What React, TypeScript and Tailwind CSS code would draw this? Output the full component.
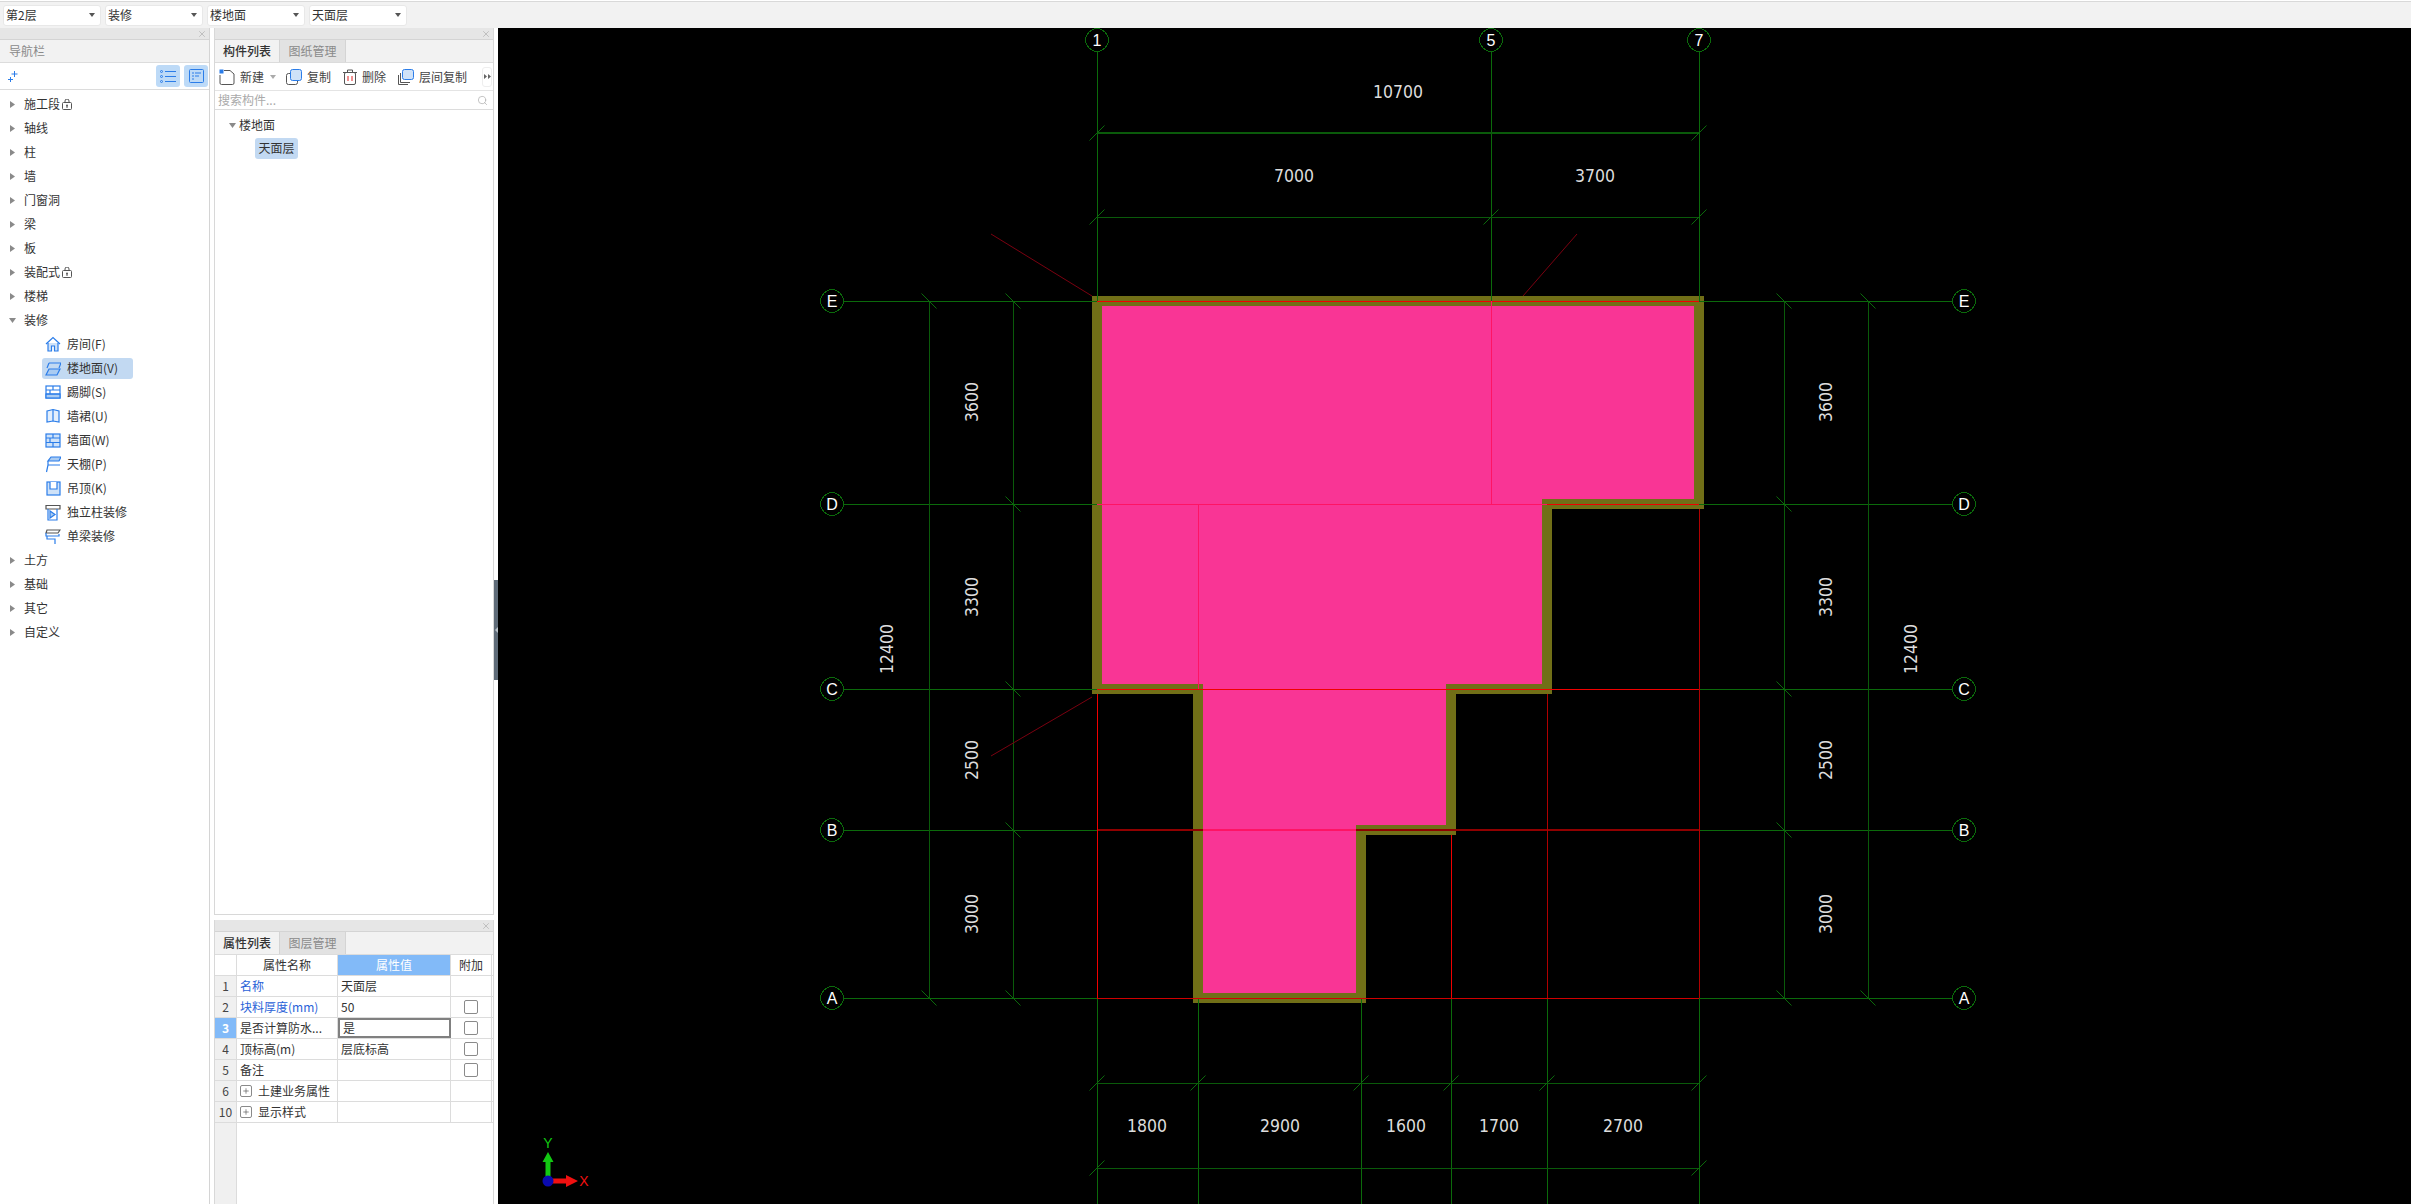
import { Search, X, Plus } from "lucide-react";

const blue = "#2b7de9";

const Caret = ({ open }: { open?: boolean }) =>
  open ? (
    <svg width="7" height="5" viewBox="0 0 7 5"><path d="M0 0H7L3.5 5Z" fill="#8a8a8a" /></svg>
  ) : (
    <svg width="5" height="7" viewBox="0 0 5 7"><path d="M0 0V7L5 3.5Z" fill="#8a8a8a" /></svg>
  );

const Lock = () => (
  <svg width="10" height="11" viewBox="0 0 10 11" fill="none" stroke="#555" className="ml-[2px]">
    <rect x="0.5" y="3.5" width="9" height="7" rx="1" />
    <path d="M3 3.5V2a2 2 0 0 1 4 0v1.5" />
    <circle cx="5" cy="6.5" r="1" fill="#555" stroke="none" />
    <path d="M5 7v2" />
  </svg>
);

const SelectBox = ({ label }: { label: string }) => (
  <div className="w-[98px] h-[21px] bg-white rounded-[3px] border border-[#e8e8e8] flex items-center justify-between pl-[2px] pr-[5px] text-[12px] text-[#333]">
    <span>{label}</span>
    <svg width="6" height="4" viewBox="0 0 6 4"><path d="M0 0H6L3 4Z" fill="#555" /></svg>
  </div>
);

const PanelClose = () => (
  <div className="h-[12px] bg-[#e6e6e6] border-b border-[#d4d4d4] flex items-center justify-end pr-[2px] shrink-0">
    <X size={10} color="#a8a8a8" strokeWidth={1.5} />
  </div>
);

// finish icons, 16x16 box
const icons: Record<string, React.ReactNode> = {
  room: (
    <>
      <path d="M1 8L8 1.5 15 8" />
      <path d="M3 7v8h3.5v-5h3v5H13V7" fill="#cfe2f8" />
    </>
  ),
  floor: (
    <>
      <path d="M4 3H16L14 8" />
      <path d="M4 3L2 8" />
      <path d="M4 9H15L12 15H1Z" fill="#a9cbf2" />
    </>
  ),
  skirt: (
    <>
      <rect x="1" y="2" width="14" height="12" fill="#fff" />
      <rect x="1" y="10" width="14" height="4" fill="#a9cbf2" />
      <path d="M1 6H15M1 10H15M8 2V6M5 6V10" />
    </>
  ),
  dado: (
    <>
      <path d="M2 3L8 1.5 14 3V14L8 13 2 14Z" fill="#e4effc" />
      <path d="M8 1.5V13" />
    </>
  ),
  wall: (
    <>
      <rect x="1" y="2" width="14" height="13" fill="#cfe2f8" />
      <path d="M1 6H15M1 10.500H15M8 2V6M5 6V10.500M8 10.500V15" />
    </>
  ),
  ceil: (
    <>
      <path d="M6 1H16L14 5H3Z" fill="#a9cbf2" />
      <path d="M3 5V9H15M3 9L1.500 16" />
    </>
  ),
  hang: (
    <>
      <rect x="2" y="2" width="13" height="13" fill="#cfe2f8" />
      <path d="M5 2V9H12V2" fill="#fff" />
    </>
  ),
  column: (
    <>
      <path d="M1 1.500H15V5H1Z" stroke="#555" />
      <path d="M3 5V16H12V5" />
      <path d="M5 7V14L10 10.500Z" fill="#a9cbf2" />
    </>
  ),
  beam: (
    <>
      <path d="M2 2H15L13 5H1Z" stroke="#555" />
      <path d="M1 5V8H14V6" />
      <path d="M2 8V11H10V16" />
    </>
  ),
};

const FinishIcon = ({ name }: { name: string }) => (
  <svg width="16" height="17" viewBox="0 0 16 17" fill="none" stroke={blue} strokeWidth="1.2" className="shrink-0">
    {icons[name]}
  </svg>
);

const topNodes = [
  { label: "施工段", lock: true },
  { label: "轴线" },
  { label: "柱" },
  { label: "墙" },
  { label: "门窗洞" },
  { label: "梁" },
  { label: "板" },
  { label: "装配式", lock: true },
  { label: "楼梯" },
];

const finishNodes = [
  { label: "房间(F)", icon: "room" },
  { label: "楼地面(V)", icon: "floor", active: true },
  { label: "踢脚(S)", icon: "skirt" },
  { label: "墙裙(U)", icon: "dado" },
  { label: "墙面(W)", icon: "wall" },
  { label: "天棚(P)", icon: "ceil" },
  { label: "吊顶(K)", icon: "hang" },
  { label: "独立柱装修", icon: "column" },
  { label: "单梁装修", icon: "beam" },
];

const TreeRow = ({ label, lock, open }: { label: string; lock?: boolean; open?: boolean }) => (
  <div className="h-[24px] flex items-center text-[12px] text-[#333]">
    <div className="w-[24px] flex justify-center pl-[5px] pr-[5px] shrink-0">
      <Caret open={open} />
    </div>
    <span>{label}</span>
    {lock && <Lock />}
  </div>
);

const NavPanel = () => (
  <div className="w-[210px] shrink-0 border-r border-[#d4d4d4] flex flex-col bg-white">
    <PanelClose />
    <div className="h-[22px] bg-[#f2f2f2] border-b border-[#dcdcdc] flex items-center pl-[9px] text-[12px] text-[#8a8a8a] box-content">
      导航栏
    </div>
    <div className="h-[27px] border-b border-[#dcdcdc] flex items-center justify-between pl-[8px] pr-[1px]">
      <svg width="10" height="11" viewBox="0 0 10 11" stroke={blue} strokeWidth="1">
        <path d="M6.500 0V6M3.500 3H9.500" />
        <path d="M2.500 6V11M0 8.500H5" />
      </svg>
      <div className="flex gap-[4px]">
        <div className="w-[24px] h-[22px] rounded-[3px] bg-[#bddaf7] flex items-center justify-center">
          <svg width="16" height="13" viewBox="0 0 16 13" fill="none" stroke={blue}>
            <circle cx="1.500" cy="1.500" r="1" />
            <circle cx="1.500" cy="6.500" r="1" />
            <circle cx="1.500" cy="11.500" r="1" />
            <path d="M5 1.500H16M5 6.500H16M5 11.500H16" />
          </svg>
        </div>
        <div className="w-[24px] h-[22px] rounded-[3px] bg-[#bddaf7] flex items-center justify-center">
          <svg width="15" height="14" viewBox="0 0 15 14" fill="none" stroke={blue}>
            <rect x="0.500" y="0.500" width="14" height="13" rx="1" />
            <path d="M3 4H5M6 4H12M3 7H5M6 7H10M3 10H5" />
          </svg>
        </div>
      </div>
    </div>
    <div className="pt-[2px]">
      {topNodes.map((n) => (
        <TreeRow key={n.label} label={n.label} lock={n.lock} />
      ))}
      <TreeRow label="装修" open />
      {finishNodes.map((n) => (
        <div key={n.label} className="h-[24px] flex items-center pl-[42px] text-[12px] text-[#333]">
          <div className={`h-[21px] flex items-center gap-[6px] rounded-[3px] pl-[3px] ${n.active ? "bg-[#c2d9f2] w-[91px]" : ""}`}>
            <FinishIcon name={n.icon} />
            <span>{n.label}</span>
          </div>
        </div>
      ))}
      <TreeRow label="土方" />
      <TreeRow label="基础" />
      <TreeRow label="其它" />
      <TreeRow label="自定义" />
    </div>
  </div>
);

const Tabs = ({ active, other }: { active: string; other: string }) => (
  <div className="h-[22px] flex bg-[#f2f2f2] border-b border-[#dcdcdc] shrink-0 text-[12px] box-content">
    <div className="w-[65px] flex items-center justify-center font-medium text-[#333] border-r border-[#d4d4d4]">{active}</div>
    <div className="w-[66px] flex items-center justify-center bg-[#e2e2e2] text-[#8a8a8a] border-r border-[#d4d4d4]">{other}</div>
  </div>
);

const ToolButton = ({ icon, label, width }: { icon: React.ReactNode; label: string; width: string }) => (
  <div className={`flex items-center gap-[5px] ${width}`}>
    {icon}
    <span>{label}</span>
  </div>
);

const ComponentPanel = () => (
  <div className="h-[887px] flex flex-col bg-white border-x border-b border-[#d8d8d8]">
    <PanelClose />
    <Tabs active="构件列表" other="图纸管理" />
    <div className="h-[28px] border-b border-[#e4e4e4] flex items-center pl-[4px] text-[12px] text-[#444] shrink-0">
      <ToolButton
        width="w-[51px]"
        label="新建"
        icon={
          <svg width="16" height="16" viewBox="0 0 16 16" fill="none" stroke="#555">
            <path d="M5 1.500H11L15 5V14a1.500 1.500 0 0 1-1.500 1.500H2.500A1.500 1.500 0 0 1 1 14V6" />
            <rect x="0.500" y="0.500" width="4" height="4" fill={blue} stroke="none" />
          </svg>
        }
      />
      <svg width="6" height="4" viewBox="0 0 6 4" className="mr-[10px]"><path d="M0 0H6L3 4Z" fill="#aaa" /></svg>
      <ToolButton
        width="w-[57px]"
        label="复制"
        icon={
          <svg width="16" height="16" viewBox="0 0 16 16" fill="none" stroke="#555">
            <rect x="0.500" y="4.500" width="11" height="11" rx="2" />
            <rect x="4.500" y="0.500" width="11" height="11" rx="2" fill="#cfe2f8" stroke={blue} />
          </svg>
        }
      />
      <ToolButton
        width="w-[55px]"
        label="删除"
        icon={
          <svg width="14" height="16" viewBox="0 0 14 16" fill="none" stroke="#555">
            <path d="M0 3.500H14M4.500 3.500V1h5v2.500" />
            <rect x="1.500" y="3.500" width="11" height="12" rx="1.500" />
            <path d="M5 7V12M9 7V12" stroke="#e02020" />
          </svg>
        }
      />
      <ToolButton
        width="w-[84px]"
        label="层间复制"
        icon={
          <svg width="16" height="16" viewBox="0 0 16 16" fill="none" stroke="#555">
            <path d="M0.500 6V15.500H10" />
            <path d="M2.500 4V13.500H12" />
            <rect x="4.500" y="0.500" width="11" height="10" rx="2" fill="#cfe2f8" stroke={blue} />
          </svg>
        }
      />
      <div className="w-[10px] h-[20px] flex items-center justify-center border border-[#eee] rounded-[3px]">
        <svg width="7" height="5" viewBox="0 0 7 5"><path d="M0 0V5L3 2.500ZM4 0V5L7 2.500Z" fill="#666" /></svg>
      </div>
    </div>
    <div className="h-[19px] border-b border-[#dcdcdc] flex items-center justify-between pl-[3px] pr-[5px] text-[12px] text-[#aaa] shrink-0">
      <span>搜索构件...</span>
      <Search size={11} color="#aaa" strokeWidth={1.5} />
    </div>
    <div className="pt-[3px] text-[12px] text-[#333]">
      <div className="h-[24px] flex items-center pl-[14px] gap-[3px]">
        <Caret open />
        <span>楼地面</span>
      </div>
      <div className="h-[22px] flex items-center pl-[40px]">
        <span className="h-[21px] w-[43px] flex items-center justify-center bg-[#c2d9f2] rounded-[3px]">天面层</span>
      </div>
    </div>
  </div>
);

const Check = () => (
  <div className="w-[14px] h-[14px] rounded-[2px] border border-[#8a8a8a] bg-white" />
);

const Expand = () => (
  <div className="w-[12px] h-[12px] rounded-[2px] border border-[#8a8a8a] flex items-center justify-center shrink-0">
    <Plus size={8} color="#555" strokeWidth={2} />
  </div>
);

const propRows = [
  { no: "1", name: "名称", value: "天面层", blue: true },
  { no: "2", name: "块料厚度(mm)", value: "50", blue: true, check: true },
  { no: "3", name: "是否计算防水...", value: "是", check: true, selected: true },
  { no: "4", name: "顶标高(m)", value: "层底标高", check: true },
  { no: "5", name: "备注", value: "", check: true },
  { no: "6", name: "土建业务属性", value: "", group: true },
  { no: "10", name: "显示样式", value: "", group: true },
];

const PropPanel = () => (
  <div className="flex-1 flex flex-col bg-white border-x border-[#d8d8d8] overflow-hidden">
    <PanelClose />
    <Tabs active="属性列表" other="图层管理" />
    <div className="flex-1 flex flex-col text-[12px] text-[#333]">
      <div className="flex h-[21px] shrink-0 border-b border-[#dcdcdc]">
        <div className="w-[22px] border-r border-[#dcdcdc]" />
        <div className="w-[101px] flex items-center justify-center border-r border-[#dcdcdc]">属性名称</div>
        <div className="w-[113px] flex items-center justify-center bg-[#82baf8] text-white border-r border-[#dcdcdc]">属性值</div>
        <div className="w-[41px] flex items-center justify-center border-r border-[#dcdcdc]">附加</div>
      </div>
      {propRows.map((r) => (
        <div key={r.no} className="flex h-[21px] shrink-0 border-b border-[#dcdcdc]">
          <div className={`w-[22px] flex items-center justify-center border-r border-[#dcdcdc] ${r.selected ? "bg-[#82baf8] text-white font-bold" : "bg-[#f0f0f0] text-[#444]"}`}>
            {r.no}
          </div>
          <div className={`w-[101px] flex items-center gap-[6px] pl-[3px] border-r border-[#dcdcdc] whitespace-nowrap ${r.blue ? "text-[#2a62d8]" : ""}`}>
            {r.group && <Expand />}
            {r.name}
          </div>
          <div className={`w-[113px] flex items-center pl-[3px] ${r.selected ? "border-2 border-[#808080]" : "border-r border-[#dcdcdc]"}`}>
            {r.value}
          </div>
          <div className="w-[41px] flex items-center justify-center border-r border-[#dcdcdc]">
            {r.check && <Check />}
          </div>
        </div>
      ))}
      <div className="flex-1 w-[22px] bg-[#f0f0f0] border-r border-[#dcdcdc]" />
    </div>
  </div>
);

// drawing coordinates are full page pixels, the viewBox starts at the canvas corner
const xs = { a1: 1097, a2: 1198, a3: 1361, a4: 1451, a5: 1491, a6: 1547, a7: 1699 };
const ys = { E: 301, D: 504, C: 689, B: 830, A: 998 };
const green = "#0b6a0b";
const darkGreen = "#0a5a0a";
const red = "#f00000";
const redOnPink = "#ff1464";
const dimRed = "#b00000";

const outline = "1097,301 1699,301 1699,504 1547,504 1547,689 1451,689 1451,830 1361,830 1361,998 1198,998 1198,689 1097,689";

const bubble = (cx: number, cy: number) =>
  Array.from({ length: 12 }, (_, i) => {
    const a = (i * Math.PI) / 6 + Math.PI / 12;
    return `${(cx + 11.500 * Math.cos(a)).toFixed(1)},${(cy + 11.500 * Math.sin(a)).toFixed(1)}`;
  }).join(" ");

const Bubble = ({ x, y, t }: { x: number; y: number; t: string }) => (
  <g>
    <polygon points={bubble(x, y)} fill="#000" stroke={green} />
    <text x={x} y={y + 6} fill="#fff" fontSize="16" textAnchor="middle" fontFamily="Liberation Sans, sans-serif">
      {t}
    </text>
  </g>
);

const Dim = ({ x, y, t, v }: { x: number; y: number; t: string; v?: boolean }) => (
  <text
    x={x}
    y={y}
    fill="#ddd"
    fontSize="18"
    textAnchor="middle"
    dominantBaseline="central"
    fontFamily="DejaVu Sans, sans-serif"
    textLength={t.length * 10}
    lengthAdjust="spacingAndGlyphs"
    transform={v ? `rotate(-90 ${x} ${y})` : undefined}
  >
    {t}
  </text>
);

const tickUp = (x: number, y: number) => `M${x - 7.500} ${y + 7.500}L${x + 7.500} ${y - 7.500}`;
const tickDown = (x: number, y: number) => `M${x - 7.500} ${y - 7.500}L${x + 7.500} ${y + 7.500}`;

const Drawing = () => {
  const ya = [ys.E, ys.D, ys.C, ys.B, ys.A];
  const bottomX = [xs.a1, xs.a2, xs.a3, xs.a4, xs.a6, xs.a7];
  return (
    <svg className="w-full h-full block" viewBox="498 28 1913 1176" shapeRendering="crispEdges">
      <polygon points={outline} fill="#f93595" stroke="#716f17" strokeWidth="10.500" strokeLinejoin="miter" />

      {/* axis lines */}
      <g stroke={green} strokeWidth="1">
        {ya.map((y) => (
          <path key={y} d={`M844 ${y}H${xs.a1}M${xs.a7} ${y}H1953`} />
        ))}
        {[xs.a1, xs.a5, xs.a7].map((x) => (
          <path key={x} d={`M${x} 52V301`} />
        ))}
        {bottomX.map((x) => (
          <path key={x} d={`M${x} 998V1204`} />
        ))}
      </g>

      {/* red grid */}
      <g stroke={red} strokeWidth="1" fill="none">
        <path d={`M${xs.a1} ${ys.E}H${xs.a7}M${xs.a1} ${ys.C}H${xs.a7}`} />
        <path d={`M${xs.a1} ${ys.D}H${xs.a6}`} stroke={redOnPink} />
        <path d={`M${xs.a6} ${ys.D}H${xs.a7}`} />
        <path d={`M${xs.a1} ${ys.A}H${xs.a7}`} stroke="#d00000" />
        <path d={`M${xs.a1} ${ys.B}H${xs.a7}`} stroke="#900000" strokeWidth="2" />
        <path d={`M1203 ${ys.B}H1356`} stroke={redOnPink} strokeWidth="2" />
        <path d={`M${xs.a2} ${ys.D}V${ys.C}M${xs.a5} ${ys.E}V${ys.D}`} stroke={redOnPink} />
        <path d={`M${xs.a1} ${ys.C + 5}V${ys.A}M${xs.a4} ${ys.B + 5}V${ys.A}`} />
        <path d={`M${xs.a6} ${ys.C + 5}V${ys.A}M${xs.a7} ${ys.D + 5}V${ys.A}`} stroke={dimRed} />
      </g>

      {/* dimension chains */}
      <g stroke={darkGreen} fill="none">
        <path d={`M${xs.a1} 133H${xs.a7}`} strokeWidth="2" />
        <path d={`M${xs.a1} 217H${xs.a7}M${xs.a1} 1083H${xs.a7}M${xs.a1} 1168H${xs.a7}`} />
        <path d={`M929 ${ys.E}V${ys.A}M1013 ${ys.E}V${ys.A}M1784 ${ys.E}V${ys.A}M1868 ${ys.E}V${ys.A}`} />
      </g>
      <g stroke={green} fill="none" shapeRendering="auto">
        {[xs.a1, xs.a7].map((x) => <path key={x} d={tickUp(x, 133)} />)}
        {[xs.a1, xs.a5, xs.a7].map((x) => <path key={x} d={tickUp(x, 217)} />)}
        {bottomX.map((x) => <path key={x} d={tickUp(x, 1083)} />)}
        {[xs.a1, xs.a7].map((x) => <path key={x} d={tickUp(x, 1168)} />)}
        {[ys.E, ys.A].map((y) => <path key={y} d={`${tickDown(929, y)}${tickDown(1868, y)}`} />)}
        {ya.map((y) => <path key={y} d={`${tickDown(1013, y)}${tickDown(1784, y)}`} />)}
      </g>

      {/* leader lines */}
      <g stroke="#7a0010" shapeRendering="auto">
        <path d="M991 234L1092 296" />
        <path d="M1577 234L1523 296" />
        <path d="M991 756L1092 697" />
      </g>

      {/* axis bubbles */}
      <Bubble x={xs.a1} y={40} t="1" />
      <Bubble x={xs.a5} y={40} t="5" />
      <Bubble x={xs.a7} y={40} t="7" />
      {(["E", "D", "C", "B", "A"] as const).map((k) => (
        <g key={k}>
          <Bubble x={832} y={ys[k]} t={k} />
          <Bubble x={1964} y={ys[k]} t={k} />
        </g>
      ))}

      <Dim x={1398} y={91} t="10700" />
      <Dim x={1294} y={175} t="7000" />
      <Dim x={1595} y={175} t="3700" />
      {[971, 1825].map((x) => (
        <g key={x}>
          <Dim v x={x} y={402} t="3600" />
          <Dim v x={x} y={597} t="3300" />
          <Dim v x={x} y={760} t="2500" />
          <Dim v x={x} y={914} t="3000" />
        </g>
      ))}
      <Dim v x={886} y={649} t="12400" />
      <Dim v x={1910} y={649} t="12400" />
      <Dim x={1147} y={1125} t="1800" />
      <Dim x={1280} y={1125} t="2900" />
      <Dim x={1406} y={1125} t="1600" />
      <Dim x={1499} y={1125} t="1700" />
      <Dim x={1623} y={1125} t="2700" />
      <Dim x={1398} y={1210} t="10700" />

      {/* ucs marker */}
      <g shapeRendering="auto">
        <path d="M545.500 1181V1162H542.500L548 1152 553.500 1162H550.500V1181Z" fill="#12c812" />
        <path d="M548 1178.500H566V1175L578 1181 566 1187V1183.500H548Z" fill="#f01010" />
        <circle cx="548" cy="1181" r="5.500" fill="#0a0ab0" />
        <text x="548" y="1148" fill="#12c812" fontSize="14" textAnchor="middle" fontFamily="Liberation Sans, sans-serif">Y</text>
        <text x="584" y="1186" fill="#f01010" fontSize="14" textAnchor="middle" fontFamily="Liberation Sans, sans-serif">X</text>
      </g>
    </svg>
  );
};

const App = () => (
  <div className="w-[2411px] h-[1204px] overflow-hidden flex flex-col bg-white [font-family:'Noto_Sans_CJK_SC',sans-serif]">
    <div className="h-[27px] shrink-0 bg-[#f2f2f2] border-t border-[#d9d9d9] mt-[1px] flex items-center gap-[4px] pl-[3px]">
      <SelectBox label="第2层" />
      <SelectBox label="装修" />
      <SelectBox label="楼地面" />
      <SelectBox label="天面层" />
    </div>
    <div className="flex-1 flex min-h-0">
      <NavPanel />
      <div className="w-[280px] shrink-0 ml-[4px] flex flex-col gap-[5px]">
        <ComponentPanel />
        <PropPanel />
      </div>
      <div className="w-[4px] shrink-0 pt-[552px]">
        <div className="w-[4px] h-[100px] bg-[#5f6b78] flex items-center justify-center">
          <svg width="3" height="6" viewBox="0 0 3 6"><path d="M3 0V6L0 3Z" fill="#b8c0c8" /></svg>
        </div>
      </div>
      <div className="flex-1 min-w-0 bg-black">
        <Drawing />
      </div>
    </div>
  </div>
);

export default App;
